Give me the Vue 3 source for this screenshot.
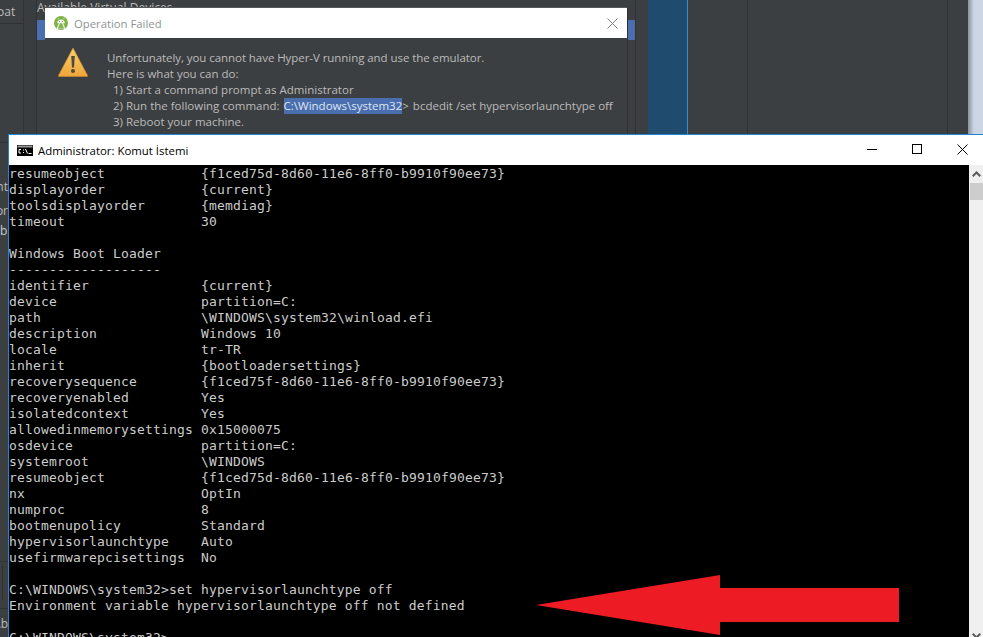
<script setup>
const lines = [
  ['resumeobject', '{f1ced75d-8d60-11e6-8ff0-b9910f90ee73}'],
  ['displayorder', '{current}'],
  ['toolsdisplayorder', '{memdiag}'],
  ['timeout', '30'],
  ['', ''],
  ['Windows Boot Loader', ''],
  ['-------------------', ''],
  ['identifier', '{current}'],
  ['device', 'partition=C:'],
  ['path', '\\WINDOWS\\system32\\winload.efi'],
  ['description', 'Windows 10'],
  ['locale', 'tr-TR'],
  ['inherit', '{bootloadersettings}'],
  ['recoverysequence', '{f1ced75f-8d60-11e6-8ff0-b9910f90ee73}'],
  ['recoveryenabled', 'Yes'],
  ['isolatedcontext', 'Yes'],
  ['allowedinmemorysettings', '0x15000075'],
  ['osdevice', 'partition=C:'],
  ['systemroot', '\\WINDOWS'],
  ['resumeobject', '{f1ced75d-8d60-11e6-8ff0-b9910f90ee73}'],
  ['nx', 'OptIn'],
  ['numproc', '8'],
  ['bootmenupolicy', 'Standard'],
  ['hypervisorlaunchtype', 'Auto'],
  ['usefirmwarepcisettings', 'No'],
  ['', ''],
  ['C:\\WINDOWS\\system32>set hypervisorlaunchtype off', ''],
  ['Environment variable hypervisorlaunchtype off not defined', ''],
  ['', ''],
  ['C:\\WINDOWS\\system32>', '']
]
</script>

<template>
  <div class="desktop">
    <div class="ide">
      <aside class="side">
        <div class="side-head"><span>oat</span></div>
        <div class="side-rule"></div>
        <div class="side-t t1"><span>nt</span></div>
        <div class="side-t t2"><span>or</span></div>
        <div class="side-t t3"><span>b</span></div>
        <div class="side-box"><div class="side-inner"></div></div>
        <div class="side-t t4"><span>\b</span></div>
      </aside>
      <div class="gutter"></div>
      <section class="list">
        <div class="list-title">Available Virtual Devices</div>
        <div class="list-sel"></div>
      </section>
      <div class="gap"></div>
      <div class="blue"></div>
      <div class="pane p1"></div>
      <div class="pane p2"></div>
      <div class="pane p3"></div>
      <div class="light"></div>
    </div>

    <div class="dialog">
      <div class="dlg-title">
        <svg class="android" width="14" height="14" viewBox="0 0 14 14">
          <circle cx="7" cy="7" r="7" fill="#7cb342" />
          <path d="M3.2 7.2a3.8 3.6 0 0 1 7.6 0z" fill="#f2f5ee" />
          <path d="M4.6 3.2 3.8 2M9.4 3.2l.8-1.2" stroke="#f2f5ee" stroke-width=".7" />
          <path d="M5.6 7 3 13M8.4 7l2.6 6" stroke="#e8ece4" stroke-width="1.3" fill="none" />
          <path d="M4 12.4h6" stroke="#b9c6a8" stroke-width="1" />
          <circle cx="5.6" cy="5.6" r=".5" fill="#5a7d34" />
          <circle cx="8.4" cy="5.6" r=".5" fill="#5a7d34" />
        </svg>
        <span class="dlg-name">Operation Failed</span>
        <svg class="dlg-close" width="11" height="11" viewBox="0 0 11 11">
          <path d="M.5.5l10 10M10.5.5l-10 10" stroke="#7d7d7d" stroke-width="1" fill="none" />
        </svg>
      </div>
      <div class="dlg-body">
        <svg class="warn" width="30" height="30" viewBox="0 0 30 30">
          <defs>
            <linearGradient id="warnFill" x1="0" y1="0" x2="0" y2="1">
              <stop offset="0" stop-color="#f8cf6a" />
              <stop offset="1" stop-color="#efa63a" />
            </linearGradient>
          </defs>
          <path d="M15 1 29.5 28.5a.6.6 0 0 1-.5.9H1a.6.6 0 0 1-.5-.9z" fill="url(#warnFill)" stroke="#d98f2b" stroke-width=".6" />
          <path d="M13.2 9h3.6l-.8 11.5h-2z" fill="#4f4a3e" />
          <circle cx="15" cy="24" r="2" fill="#4f4a3e" />
        </svg>
        <div class="msg">
          <div class="first">Unfortunately, you cannot have Hyper-V running and use the emulator.</div>
          <div>Here is what you can do:</div>
          <div class="step">1) Start a command prompt as Administrator</div>
          <div class="step">2) Run the following command: <span class="sel">C:\Windows\system32</span><span class="cmd">&gt;</span><span class="cmd2">bcdedit /set hypervisorlaunchtype off</span></div>
          <div class="step">3) Reboot your machine.</div>
        </div>
      </div>
    </div>

    <div class="term">
      <header class="term-head">
        <svg class="cmd-icon" width="16" height="11" viewBox="0 0 16 11">
          <rect width="16" height="11" fill="#000" />
          <rect x=".5" y=".5" width="15" height="2" fill="#9a9a9a" />
          <path d="M2 4.5H4M2 4.5V8M2 8H4M6 5h1M6 7.5h1M8.5 4l2 4.5M11.5 8.5h3" stroke="#fff" stroke-width="1" fill="none" />
        </svg>
        <span class="term-name">Administrator: Komut İstemi</span>
        <div class="ctrls">
          <svg width="10" height="10" viewBox="0 0 10 10"><path d="M0 5.5h10" stroke="#000" fill="none" /></svg>
          <svg width="10" height="10" viewBox="0 0 10 10"><rect x=".5" y=".5" width="9" height="9" stroke="#000" fill="none" /></svg>
          <svg width="11" height="11" viewBox="0 0 11 11"><path d="M.5.5l10 10M10.5.5l-10 10" stroke="#000" fill="none" /></svg>
        </div>
      </header>
      <div class="term-main">
        <div class="console">
          <div v-for="(l, i) in lines" :key="i" class="line">
            <span :class="{ key: l[1] }">{{ l[0] }}</span><span>{{ l[1] }}</span>
          </div>
          <svg class="arrow" width="364" height="61" viewBox="0 0 364 61">
            <path d="M0 30 184 0V13H363V47H184V60Z" fill="#ed1c24" />
          </svg>
        </div>
        <div class="scroll">
          <svg class="up" width="9" height="6" viewBox="0 0 9 6"><path d="M.7 5.3 4.5 1.5l3.8 3.8" stroke="#5a5a5a" stroke-width="2" fill="none" /></svg>
          <div class="thumb"></div>
          <div class="track"></div>
          <svg class="down" width="9" height="6" viewBox="0 0 9 6"><path d="M.7.7 4.5 4.5 8.3.7" stroke="#5a5a5a" stroke-width="2" fill="none" /></svg>
        </div>
      </div>
    </div>
  </div>
</template>

<style scoped>
.desktop {
  position: relative;
  width: 983px;
  height: 637px;
  overflow: hidden;
  background: #3c3f41;
  font-family: "Open Sans", "Noto Sans", sans-serif;
}
.ide {
  display: flex;
  height: 100%;
  color: #bbbbbb;
  font-size: 12px;
}
.side {
  width: 23px;
  flex: none;
  border-right: 1px solid #323232;
  display: flex;
  flex-direction: column;
  overflow: hidden;
}
.side-head {
  height: 23px;
  flex: none;
  border-bottom: 1px solid #2f3133;
  display: flex;
  align-items: center;
  margin-bottom: 118px;
  white-space: nowrap;
}
.side-head span { margin-left: -3px; }
.side-rule { height: 1px; flex: none; background: #323232; margin-bottom: 36px; }
.side-t {
  width: 8px;
  height: 16px;
  flex: none;
  line-height: 16px;
  white-space: nowrap;
  overflow: hidden;
  display: flex;
  justify-content: flex-end;
}
.t1 { margin-bottom: 8px; }
.t2 { margin-bottom: 4px; }
.t3 { margin-bottom: 322px; color: #c5cbd3; justify-content: flex-start; }
.side-box {
  height: 44px;
  flex: none;
  padding: 3px 0 8px 2px;
  box-sizing: content-box;
  height: 35px;
  border-top: 1px solid #2f3133;
  border-bottom: 1px solid #2f3133;
  margin-bottom: 7px;
}
.side-inner { height: 100%; border-left: 1px solid #2f3133; }
.gutter {
  width: 12px;
  flex: none;
  background: #3a3d3f;
  border-right: 1px solid #323232;
}
.list {
  width: 598px;
  flex: none;
  border-right: 1px solid #323232;
}
.list-title { height: 19px; line-height: 14px; padding-top: 1px; white-space: nowrap; font-size: 12px; }
.list-sel { height: 20px; background: #4b6eaf; }
.gap { width: 12px; flex: none; }
.blue {
  width: 39px;
  flex: none;
  background: #1f4b6f;
  border-right: 1px solid #3b8ccb;
}
.pane { flex: none; border-right: 1px solid #323232; }
.p1 { width: 59px; }
.p2 { width: 199px; }
.p3 { width: 20px; border-right: none; }
.light {
  flex: 1;
  background: linear-gradient(90deg, #8c919a, #cdd6e4 6px);
}

.dialog {
  position: absolute;
  left: 45px;
  top: 8px;
  width: 582px;
  height: 126px;
  display: flex;
  flex-direction: column;
  background: #3c3f41;
  box-shadow: 0 -1px 0 #55585a, 1px 0 0 #2f3133;
}
.dlg-title {
  height: 30px;
  flex: none;
  background: #fff;
  display: flex;
  align-items: center;
  padding-left: 9px;
  padding-right: 9px;
}
.dlg-name {
  margin-left: 6px;
  font-size: 11.3px;
  color: #8f9396;
  flex: 1;
}
.dlg-body {
  display: flex;
  padding: 9px 0 0 13px;
}
.warn { flex: none; }
.msg {
  margin-left: 19px;
  margin-top: 3px;
  font-size: 11.5px;
  line-height: 16px;
  color: #bbbbbb;
  white-space: nowrap;
}
.first { letter-spacing: -0.06px; }
.step { padding-left: 6px; }
.sel {
  display: inline-block;
  margin-left: 1px;
  background: #4b6eaf;
  color: #dfe6f2;
}
.cmd2 { margin-left: 4px; }

.term {
  position: absolute;
  left: 8px;
  top: 134px;
  right: 0;
  bottom: 0;
  display: flex;
  flex-direction: column;
  background: #fff;
  border-top: 1px solid #1c86d8;
  border-left: 1px solid #1c86d8;
}
.term-head {
  height: 30px;
  flex: none;
  display: flex;
  align-items: center;
  padding-left: 8px;
  color: #000;
  font-size: 11.4px;
}
.cmd-icon { flex: none; }
.term-name { margin-left: 5px; flex: 1; }
.ctrls {
  display: flex;
  align-items: center;
  gap: 35px;
  margin-right: 15px;
  margin-bottom: 2px;
}
.term-main {
  flex: 1;
  min-height: 0;
  display: flex;
}
.console {
  position: relative;
  flex: 1;
  padding-top: 1px;
  background: #000;
  color: #cccccc;
  font-family: "DejaVu Sans Mono", "Liberation Mono", monospace;
  font-size: 13px;
  letter-spacing: 0.17px;
  overflow: hidden;
}
.line {
  height: 16px;
  line-height: 16px;
  white-space: pre;
}
.key { display: inline-block; width: 192px; }
.arrow {
  position: absolute;
  left: 527px;
  top: 410px;
}
.scroll {
  width: 14px;
  flex: none;
  background: #f0f0f0;
  display: flex;
  flex-direction: column;
  align-items: center;
}
.up { margin-top: 6px; flex: none; }
.thumb {
  height: 17px;
  width: 13px;
  align-self: flex-end;
  background: #cdcdcd;
  margin-top: 6px;
  flex: none;
}
.track { flex: 1; }
.down { flex: none; margin-bottom: -2px; }
</style>
